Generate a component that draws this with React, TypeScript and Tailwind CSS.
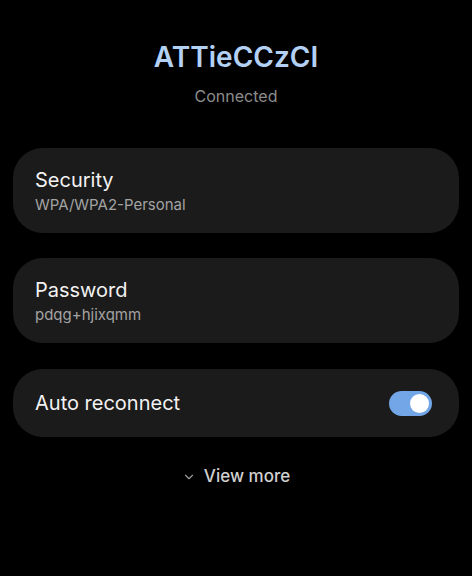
import { ChevronDown } from 'lucide-react'

function InfoCard({ title, value }: { title: string; value: string }) {
  return (
    <div className="bg-[#1b1b1b] rounded-[30px] h-[85px] px-[22px] flex flex-col justify-center">
      <div className="text-[20px] leading-[26px] text-[#f2f2f2]">{title}</div>
      <div className="text-[15px] leading-[20px] text-[#a3a3a3] mt-[2px]">{value}</div>
    </div>
  )
}

export default function App() {
  return (
    <div
      className="w-[472px] h-[576px] bg-black flex flex-col"
      style={{ fontFamily: 'Inter, Roboto, "Noto Sans", sans-serif' }}
    >
      <div className="pt-[40px] flex flex-col items-center">
        <div className="text-[28px] leading-[34px] font-semibold text-[#b3d0f5]">ATTieCCzCI</div>
        <div className="text-[16px] leading-[20px] text-[#8c8c8c] mt-[12px]">Connected</div>
      </div>

      <div className="px-[13px] mt-[42px] flex flex-col">
        <InfoCard title="Security" value="WPA/WPA2-Personal" />
        <div className="h-[25px]" />
        <InfoCard title="Password" value="pdqg+hjixqmm" />
        <div className="h-[26px]" />
        <div className="bg-[#1b1b1b] rounded-[30px] h-[68px] pl-[22px] pr-[27px] flex items-center justify-between">
          <div className="text-[20px] text-[#f2f2f2]">Auto reconnect</div>
          <div className="w-[43px] h-[25px] rounded-full bg-[#72a6e6] flex items-center justify-end pr-[3px]">
            <div className="w-[19px] h-[19px] rounded-full bg-white" />
          </div>
        </div>
      </div>

      <div className="mt-[27px] flex items-center justify-center gap-[8px] text-[#d0d0d0]">
        <ChevronDown size={14} strokeWidth={2} className="text-[#9a9a9a]" />
        <span className="text-[17px] font-medium">View more</span>
      </div>
    </div>
  )
}
